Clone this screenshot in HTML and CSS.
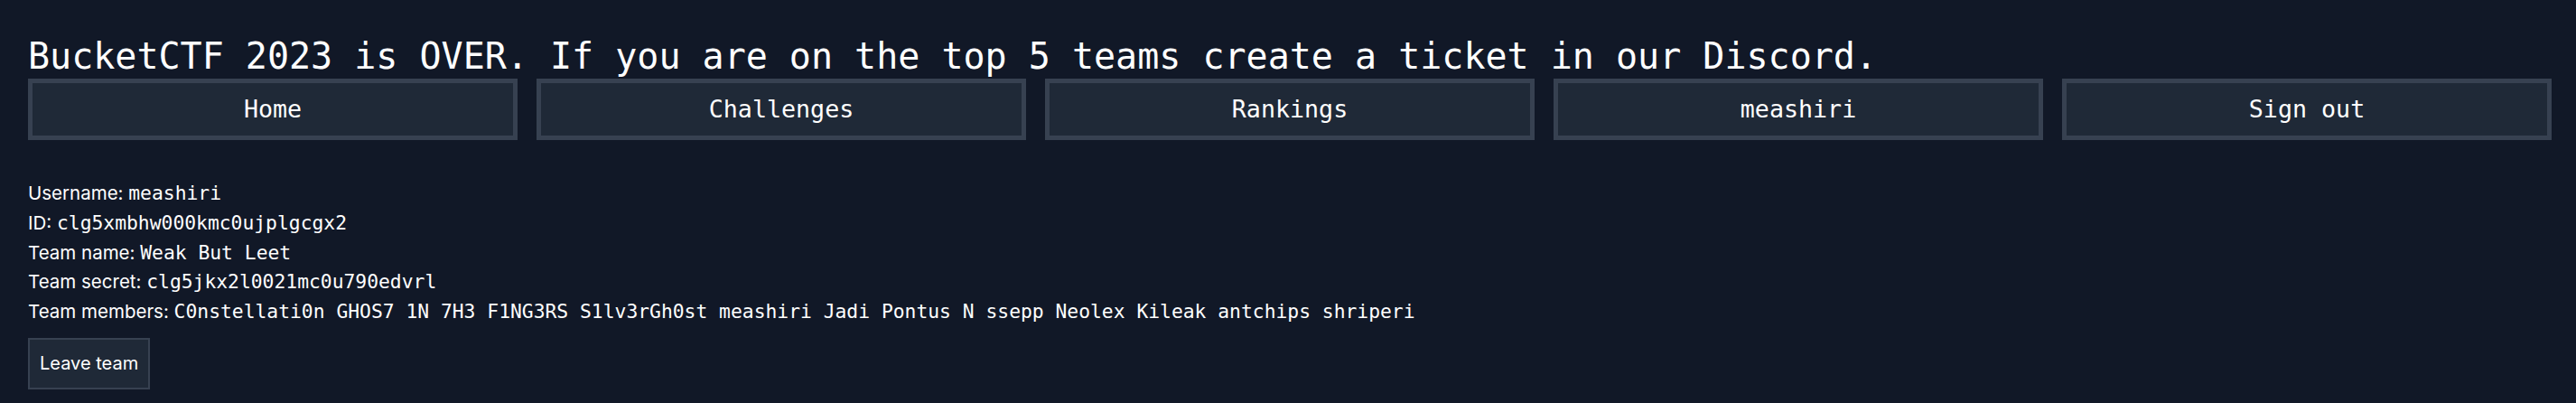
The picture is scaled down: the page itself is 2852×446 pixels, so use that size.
FILE: index.html
```html
<!DOCTYPE html>
<html lang="en">
<head>
<meta charset="utf-8">
<title>BucketCTF 2023 - Profile</title>
<link rel="stylesheet" href="styles.css">
</head>
<body>
<div class="page">
  <h1 class="banner">BucketCTF 2023 is OVER. If you are on the top 5 teams create a ticket in our Discord.</h1>
  <nav class="nav">
    <a class="nav-btn" href="#">Home</a>
    <a class="nav-btn" href="#">Challenges</a>
    <a class="nav-btn" href="#">Rankings</a>
    <a class="nav-btn" href="#">meashiri</a>
    <a class="nav-btn" href="#">Sign out</a>
  </nav>
  <section class="profile">
    <div class="row">Username: <span class="mono">meashiri</span></div>
    <div class="row">ID: <span class="mono">clg5xmbhw000kmc0ujplgcgx2</span></div>
    <div class="row">Team name: <span class="mono">Weak But Leet</span></div>
    <div class="row">Team secret: <span class="mono">clg5jkx2l0021mc0u790edvrl</span></div>
    <div class="row">Team members: <span class="mono">C0nstellati0n GHOS7 1N 7H3 F1NG3RS S1lv3rGh0st meashiri Jadi Pontus N ssepp Neolex Kileak antchips shriperi</span></div>
    <button class="leave-btn" type="button">Leave team</button>
  </section>
</div>
</body>
</html>
```
FILE: styles.css
```css
html, body {
  margin: 0;
  padding: 0;
  background: #111827;
  color: #ffffff;
}
body {
  font-family: Inter, "Noto Sans", "Liberation Sans", sans-serif;
  font-size: 20.5px;
}
.page {
  padding: 38px 27px 0 31px;
}
.banner {
  margin: 0;
  font-family: "DejaVu Sans Mono", "Liberation Mono", monospace;
  font-weight: normal;
  font-size: 40px;
  line-height: 49px;
  white-space: nowrap;
}
.nav {
  display: flex;
  gap: 21px;
}
.nav-btn {
  flex: 1 1 0;
  display: block;
  box-sizing: border-box;
  height: 68px;
  background: #1f2937;
  border: 5px solid #374151;
  color: #ffffff;
  text-decoration: none;
  text-align: center;
  font-family: "DejaVu Sans Mono", "Liberation Mono", monospace;
  font-size: 26.67px;
  line-height: 58px;
}
.profile {
  margin-top: 43px;
}
.row {
  line-height: 32.75px;
  height: 32.75px;
  white-space: nowrap;
}
.mono {
  font-family: "DejaVu Sans Mono", "Liberation Mono", monospace;
  font-size: 21.33px;
}
.leave-btn {
  margin-top: 12px;
  box-sizing: border-box;
  height: 57px;
  padding: 0 11px;
  background: #1f2937;
  border: 2px solid #374151;
  color: #ffffff;
  font-family: Inter, "Noto Sans", "Liberation Sans", sans-serif;
  font-size: 20px;
}
```
